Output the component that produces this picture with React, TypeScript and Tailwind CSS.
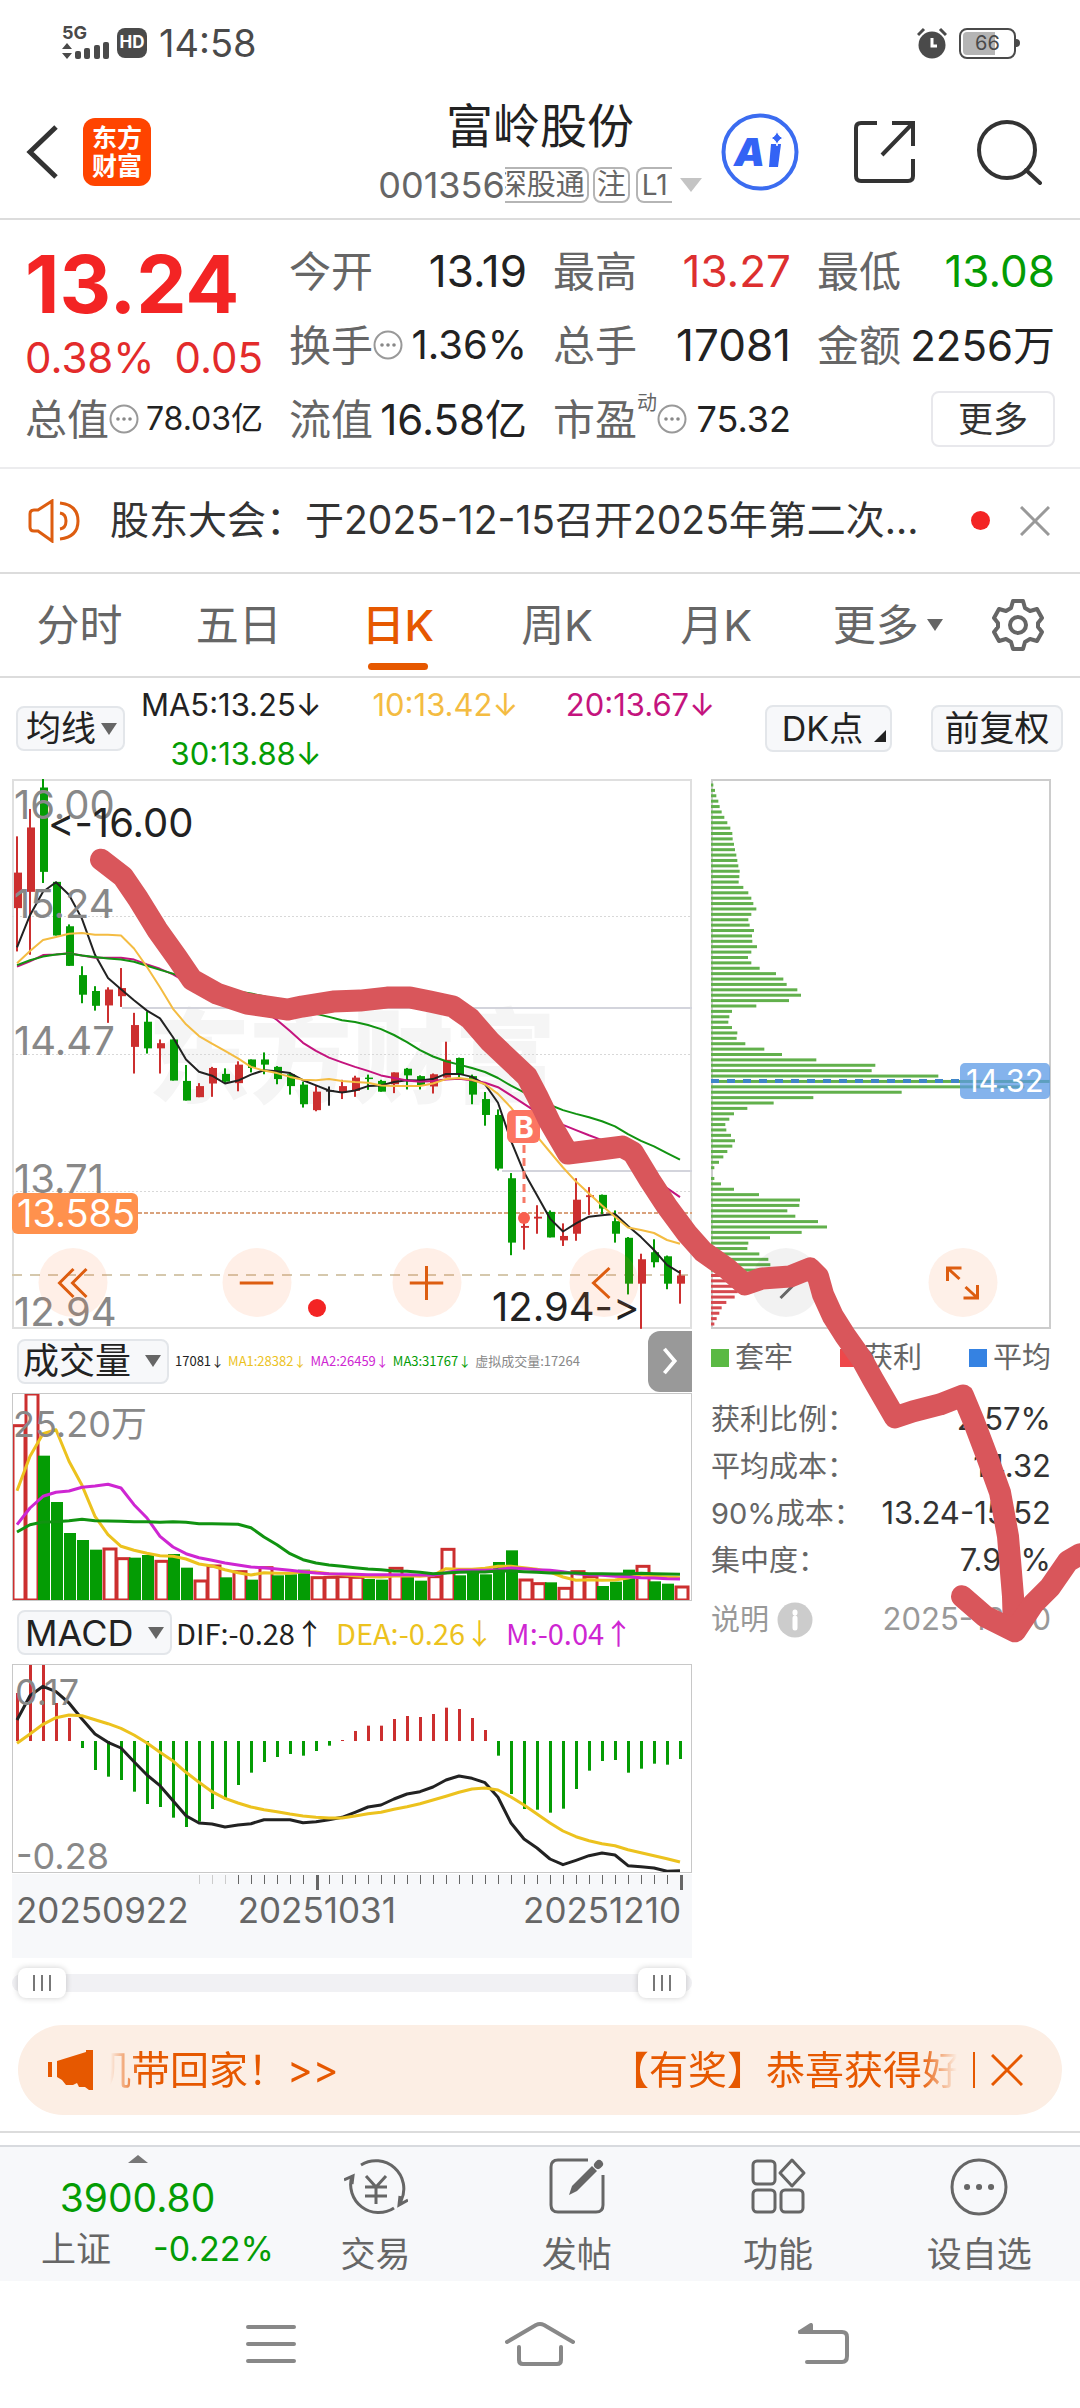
import type { ReactNode } from "react";
import { clsx } from "clsx";

const RED = "#cc2f2f";
const GREEN = "#049c04";
const FONT = "Inter, 'Noto Sans CJK SC', sans-serif";

const STEP = 13;
const FIRST = 5;
const xAt = (i: number) => FIRST + i * STEP;

// color, high, low, body top, body bottom
type Candle = ["r" | "g" | "k", number, number, number, number];

const candles: Candle[] = [
  ["r", 182, 493, 280, 376], ["r", 108, 502, 158, 332], ["g", 27, 308, 50, 278], ["g", 305, 450, 305, 450],
  ["g", 420, 532, 425, 532], ["g", 533, 633, 557, 610], ["g", 587, 653, 600, 640], ["r", 590, 686, 596, 639],
  ["r", 538, 643, 592, 614], ["r", 659, 823, 692, 751], ["g", 655, 769, 683, 755], ["r", 731, 823, 741, 755],
  ["g", 731, 842, 731, 842], ["g", 800, 896, 843, 896], ["r", 849, 887, 857, 887], ["r", 805, 886, 808, 850],
  ["g", 809, 850, 824, 845], ["r", 790, 871, 799, 849], ["g", 785, 820, 785, 808], ["g", 766, 825, 785, 799],
  ["g", 803, 852, 805, 838], ["g", 820, 880, 825, 857], ["g", 845, 915, 853, 906], ["r", 855, 925, 872, 922],
  ["k", 858, 910, 868, 872], ["r", 840, 892, 857, 874], ["r", 829, 886, 834, 870], ["g", 826, 867, 834, 838],
  ["g", 840, 872, 843, 872], ["r", 820, 876, 820, 852], ["g", 808, 866, 810, 828], ["g", 828, 866, 830, 856],
  ["r", 823, 877, 825, 858], ["r", 737, 834, 786, 834], ["g", 780, 840, 781, 825], ["g", 826, 906, 830, 880],
  ["g", 873, 964, 892, 935], ["g", 920, 1085, 935, 1080], ["g", 1092, 1314, 1106, 1280], ["r", 1200, 1299, 1235, 1240],
  ["r", 1179, 1256, 1210, 1215], ["g", 1193, 1266, 1197, 1266], ["r", 1228, 1289, 1262, 1274], ["r", 1106, 1275, 1164, 1256],
  ["r", 1130, 1205, 1152, 1157], ["g", 1150, 1203, 1151, 1188], ["g", 1193, 1280, 1222, 1256], ["g", 1265, 1420, 1267, 1391],
  ["r", 1310, 1513, 1325, 1391], ["g", 1271, 1347, 1306, 1333], ["g", 1315, 1406, 1317, 1391], ["r", 1354, 1445, 1369, 1391],
];

const ma5 = [482, 395, 332, 306, 340, 405, 502, 565, 595, 625, 653, 674, 725, 785, 818, 829, 850, 842, 826, 814, 817, 822, 841, 855, 869, 874, 869, 857, 855, 846, 841, 842, 838, 824, 824, 832, 852, 902, 1005, 1090, 1152, 1215, 1250, 1228, 1210, 1206, 1203, 1235, 1265, 1300, 1340, 1362];
const ma10 = [525, 492, 462, 454, 445, 443, 448, 448, 450, 485, 535, 590, 648, 690, 722, 742, 762, 782, 805, 815, 822, 832, 840, 841, 838, 843, 846, 848, 855, 857, 857, 857, 850, 838, 835, 840, 852, 878, 915, 960, 993, 1035, 1077, 1115, 1147, 1180, 1210, 1239, 1246, 1254, 1273, 1283];
const ma20 = [534, 520, 503, 501, 498, 504, 510, 510, 510, 515, 528, 540, 555, 575, 592, 600, 612, 622, 640, 655, 678, 708, 740, 762, 780, 793, 805, 816, 828, 835, 842, 845, 843, 839, 837, 841, 848, 860, 882, 905, 928, 945, 962, 976, 990, 1003, 1030, 1060, 1080, 1105, 1133, 1157];
const ma30 = [530, 517, 507, 501, 499, 504, 508, 512, 515, 521, 532, 543, 553, 565, 578, 590, 596, 601, 607, 614, 625, 638, 650, 662, 670, 679, 684, 692, 703, 719, 738, 760, 777, 790, 799, 808, 819, 835, 856, 874, 892, 908, 922, 932, 941, 952, 966, 987, 1005, 1020, 1038, 1056];

const volumes: [string, number][] = [
  ["r", 285], ["r", 190], ["g", 378], ["g", 517], ["g", 610], ["g", 631], ["g", 660], ["r", 655], ["r", 684], ["g", 684], ["g", 676], ["r", 692], ["g", 673],
  ["g", 714], ["r", 751], ["r", 706], ["g", 743], ["r", 723], ["g", 750], ["r", 711], ["g", 737], ["g", 734], ["g", 720], ["r", 741], ["r", 740], ["r", 738],
  ["r", 740], ["g", 748], ["g", 750], ["r", 713], ["g", 740], ["g", 753], ["r", 738], ["r", 656], ["g", 737], ["g", 728], ["g", 734], ["g", 697], ["g", 662],
  ["r", 748], ["r", 759], ["g", 758], ["r", 773], ["r", 723], ["r", 738], ["g", 769], ["g", 756], ["g", 720], ["r", 707], ["g", 755], ["g", 762], ["r", 769],
];
const vma1 = [483, 380, 312, 300, 395, 467, 560, 615, 650, 662, 671, 678, 680, 688, 703, 709, 720, 729, 736, 729, 731, 731, 726, 727, 732, 735, 738, 741, 742, 739, 738, 740, 737, 717, 719, 719, 716, 710, 710, 714, 719, 727, 742, 752, 750, 752, 751, 745, 735, 740, 742, 744];
const vma2 = [585, 535, 500, 488, 484, 473, 469, 464, 475, 525, 565, 620, 652, 672, 684, 692, 700, 706, 712, 714, 718, 722, 726, 730, 732, 733, 734, 735, 735, 735, 735, 736, 737, 729, 722, 722, 722, 720, 715, 717, 720, 722, 726, 732, 735, 737, 740, 741, 744, 745, 747, 748];
const vma3 = [607, 585, 577, 576, 573, 569, 573, 574, 575, 576, 576, 578, 576, 578, 582, 582, 583, 584, 594, 622, 645, 672, 690, 700, 706, 710, 714, 718, 720, 724, 725, 728, 732, 730, 728, 727, 727, 724, 724, 726, 728, 730, 730, 730, 732, 732, 733, 733, 731, 732, 733, 734];

const macd = [282, 195, 195, 312, 357, 447, 513, 533, 543, 578, 615, 624, 656, 684, 668, 630, 602, 558, 521, 489, 474, 465, 470, 456, 440, 423, 396, 380, 380, 360, 351, 354, 345, 326, 330, 357, 393, 470, 585, 630, 632, 641, 629, 570, 515, 486, 483, 521, 509, 494, 497, 480];
const dif = [363, 290, 262, 278, 312, 360, 405, 430, 447, 488, 528, 560, 605, 650, 672, 675, 684, 678, 674, 662, 662, 662, 671, 668, 662, 655, 640, 624, 618, 600, 585, 578, 564, 543, 531, 538, 551, 595, 672, 720, 747, 780, 797, 784, 770, 762, 768, 800, 803, 807, 817, 815];
const dea = [433, 405, 376, 356, 348, 350, 362, 374, 388, 408, 432, 460, 486, 520, 550, 578, 598, 612, 624, 632, 638, 645, 651, 655, 657, 657, 651, 644, 640, 631, 623, 614, 603, 592, 580, 570, 567, 573, 594, 618, 645, 672, 696, 713, 725, 734, 740, 752, 761, 770, 779, 789];

const chips = [
  7, 12, 16, 22, 26, 32, 40, 49, 58, 64, 65, 69, 72, 76, 79, 82, 86, 85, 83, 97, 112, 121, 127, 136, 121, 112, 116, 129, 123, 124, 138, 121, 111, 121,
  146, 195, 217, 227, 259, 270, 234, 136, 63, 55, 52, 63, 79, 77, 103, 160, 213, 316, 493, 482, 682, 1016, 940, 572, 307, 188, 109, 69, 55, 43, 46, 60,
  72, 64, 49, 37, 24, 10, 0, 10, 30, 69, 144, 267, 265, 229, 253, 321, 348, 272, 177, 112, 109, 145, 172, 178, 150, 110, 80, 75, 80, 71, 46, 32, 25, 17, 10,
];

const priceY = (v: number) => (v - 27) * 0.37;
const volY = (v: number) => (v - 190) / 3;
const macdY = (v: number) => (v - 195) / 3;

function Line({ data, y, color, width = 2 }: { data: number[]; y: (v: number) => number; color: string; width?: number }) {
  return (
    <polyline
      fill="none"
      stroke={color}
      strokeWidth={width}
      strokeLinejoin="round"
      points={data.map((v, i) => `${xAt(i)},${y(v).toFixed(1)}`).join(" ")}
    />
  );
}

function Triangle({ className }: { className: string }) {
  return (
    <svg viewBox="0 0 10 10" preserveAspectRatio="none" className={className} aria-hidden="true">
      <path d="M0 0H10L5 10Z" fill="currentColor" />
    </svg>
  );
}

function Dots() {
  return (
    <svg viewBox="0 0 30 30" className="h-[30px] w-[30px] shrink-0" aria-hidden="true">
      <circle cx="15" cy="15" r="13.5" fill="none" stroke="#999" strokeWidth="2" />
      <g fill="#888">
        <circle cx="9" cy="15" r="1.8" />
        <circle cx="15" cy="15" r="1.8" />
        <circle cx="21" cy="15" r="1.8" />
      </g>
    </svg>
  );
}

function Stat({ label, value, extra, color = "text-[#222]", size = "text-[44px]" }: { label: string; value: string; extra?: ReactNode; color?: string; size?: string }) {
  return (
    <div className="flex h-[74px] items-center whitespace-nowrap">
      <span className="text-[42px] text-[#666]">{label}</span>
      {extra}
      <span className={clsx("ml-auto", color, size)}>{value}</span>
    </div>
  );
}

function Picker({ label, option, className }: { label: string; option: string; className: string }) {
  return (
    <label className="relative flex h-[45px] shrink-0 items-center rounded-lg border-2 border-[#e3e6ea] bg-[#f7f8fa] text-[#222]">
      <select aria-label={label} className={clsx("h-14 appearance-none bg-transparent outline-none", className)}>
        <option>{option}</option>
      </select>
      <Triangle className="pointer-events-none absolute right-1.5 h-3 w-4 text-[#666]" />
    </label>
  );
}

function StatusBar() {
  return (
    <div className="flex h-[86px] items-center pr-[60px] pl-[62px] text-[#4a4a4a]">
      <svg viewBox="0 0 48 36" className="h-9 w-12 overflow-visible" fill="currentColor" aria-hidden="true">
        <text x="0" y="14" fontSize="18" fontWeight="700" style={{ fontFamily: FONT }}>5G</text>
        <path d="M0 24L5 18L10 24ZM0 28L5 34L10 28Z" />
        <rect x="13" y="26" width="6" height="8" rx="2" />
        <rect x="22" y="23" width="6" height="11" rx="2" />
        <rect x="32" y="20" width="6" height="14" rx="2" />
        <rect x="41" y="17" width="6" height="17" rx="2" />
      </svg>
      <span className="ml-[7px] flex h-[30px] w-[30px] items-center justify-center rounded-lg bg-[#4a4a4a] text-[17px] font-bold text-white">HD</span>
      <span className="ml-3 text-[38px]">14:58</span>
      <svg viewBox="0 0 30 32" className="ml-auto h-8 w-[30px]" aria-hidden="true">
        <circle cx="15" cy="18" r="13.5" fill="currentColor" />
        <path d="M1 8L7 2M29 8L23 2" stroke="currentColor" strokeWidth="3" />
        <path d="M15 11V19H20" fill="none" stroke="#fff" strokeWidth="3" />
      </svg>
      <div className="ml-3 flex items-center">
        <div className="flex h-[31px] w-[57px] items-center rounded-lg border-2 border-[#4a4a4a] p-0.5">
          <span className="flex h-full w-[32px] items-center justify-end rounded-l bg-[#b5b5b5]" />
          <span className="-ml-5 text-[20px] leading-none">66</span>
        </div>
        <span className="h-2 w-1 rounded-r bg-[#4a4a4a]" />
      </div>
    </div>
  );
}

function Header() {
  return (
    <header className="grid h-[134px] grid-cols-[1fr_auto_1fr] items-center border-b-2 border-[#dcdcdc]">
      <div className="flex items-center gap-6 pl-[26px]">
        <button type="button" aria-label="返回">
          <svg viewBox="0 0 33 56" className="h-14 w-[33px]" fill="none" stroke="#333" strokeWidth="5">
            <path d="M30 3L4 28L30 53" />
          </svg>
        </button>
        <div className="flex h-[68px] w-[68px] flex-col items-center justify-center rounded-xl bg-[#ff4400] text-[25px] leading-[28px] font-bold text-white">
          <span>东方</span>
          <span>财富</span>
        </div>
      </div>
      <div className="flex flex-col items-center">
        <h1 className="text-[47px] leading-[52px] text-[#222]">富岭股份</h1>
        <div className="mt-[14px] flex h-[38px] items-center text-[36px] text-[#666]">
          <span>001356</span>
          <span className="flex h-9 w-[84px] items-center justify-end overflow-hidden rounded-r-lg border-2 border-l-0 border-[#b5b5b5] pr-0.5 text-[29px]">
            <span className="shrink-0">深股通</span>
          </span>
          <span className="ml-1 flex h-9 w-[37px] items-center justify-center rounded-lg border-2 border-[#b5b5b5] text-[29px]">注</span>
          <span className="ml-1.5 flex h-9 w-[36px] items-center justify-center rounded-l-lg border-2 border-r-0 border-[#b5b5b5] text-[28px]">L1</span>
          <Triangle className="ml-2 h-[14px] w-[22px] text-[#c4c4c4]" />
        </div>
      </div>
      <div className="flex items-center justify-end pr-[38px]">
        <button type="button" aria-label="Ai">
          <svg viewBox="0 0 78 78" className="h-[78px] w-[78px]">
            <circle cx="39" cy="39" r="36.5" fill="none" stroke="#3b6cf0" strokeWidth="4" />
            <text x="13" y="53" fontSize="39" fontWeight="900" fontStyle="italic" fill="#3363f5" style={{ fontFamily: FONT }}>A</text>
            <path d="M50 31H60L57 54H48Z" fill="#3363f5" />
            <path d="M56 17Q57 24 63 25Q57 26 56 33Q55 26 49 25Q55 24 56 17Z" fill="#3363f5" stroke="#fff" strokeWidth="1" />
          </svg>
        </button>
        <button type="button" aria-label="分享" className="ml-[53px]">
          <svg viewBox="0 0 66 66" className="h-[66px] w-[66px]" fill="none" stroke="#333" strokeWidth="4">
            <path d="M25 4H9Q4 4 4 9V57Q4 62 9 62H56Q61 62 61 57V40M40 4H61V27M61 4L30 36" />
          </svg>
        </button>
        <button type="button" aria-label="搜索" className="ml-[58px]">
          <svg viewBox="0 0 66 66" className="h-[66px] w-[66px]" fill="none" stroke="#333" strokeWidth="4">
            <circle cx="31" cy="31" r="28" />
            <path d="M50 51L64 64" strokeLinecap="round" />
          </svg>
        </button>
      </div>
    </header>
  );
}

function Quote() {
  return (
    <section className="grid grid-cols-4 gap-x-[26px] border-b-2 border-[#ececee] px-[25px] pt-[14px] pb-[11px]">
      <div className="row-span-2 pt-2 text-[#f32424]">
        <div className="text-[80px] leading-[84px] font-bold">13.24</div>
        <div className="mt-2 flex justify-between text-[42px] leading-[48px] text-[#e32b2b]">
          <span>0.38%</span>
          <span>0.05</span>
        </div>
      </div>
      <Stat label="今开" value="13.19" />
      <Stat label="最高" value="13.27" color="text-[#dd2f2f]" />
      <Stat label="最低" value="13.08" color="text-[#049c04]" />
      <Stat label="换手" value="1.36%" extra={<Dots />} size="text-[40px]" />
      <Stat label="总手" value="17081" />
      <Stat label="金额" value="2256万" size="text-[42px]" />
      <Stat label="总值" value="78.03亿" extra={<Dots />} size="text-[32px]" />
      <Stat label="流值" value="16.58亿" size="text-[42px]" />
      <Stat
        label="市盈"
        value="75.32"
        size="text-[36px]"
        extra={
          <>
            <sup className="-top-4 text-[20px] text-[#666]">动</sup>
            <Dots />
          </>
        }
      />
      <div className="flex items-center justify-end">
        <button type="button" className="h-14 w-[124px] rounded-lg border-2 border-[#e8e8ec] text-[35px] text-[#333]">更多</button>
      </div>
    </section>
  );
}

function Notice() {
  return (
    <div className="flex h-[105px] items-center border-b-2 border-[#dcdcdc] pr-[30px] pl-[28px]">
      <svg viewBox="0 0 52 44" className="h-11 w-[52px] shrink-0" fill="none" stroke="#dd5d10" strokeWidth="3" aria-hidden="true">
        <path d="M10 11H6Q2 11 2 15V28Q2 32 6 32H10L24 42V2L10 11ZM32 14Q38 15 38 22Q38 29 32 30M32 4Q50 6 50 22Q50 38 32 40" />
      </svg>
      <p className="ml-[30px] min-w-0 flex-1 truncate text-[39px] text-[#333]">股东大会：于2025-12-15召开2025年第二次...</p>
      <span className="ml-4 h-[19px] w-[19px] shrink-0 rounded-full bg-[#f32424]" />
      <button type="button" aria-label="关闭" className="ml-[30px]">
        <svg viewBox="0 0 30 30" className="h-[30px] w-[30px]" stroke="#999" strokeWidth="3">
          <path d="M1 1L29 29M29 1L1 29" />
        </svg>
      </button>
    </div>
  );
}

const tabs = ["分时", "五日", "日K", "周K", "月K"];

function Tabs() {
  return (
    <nav className="grid h-[104px] grid-cols-[repeat(6,minmax(0,1fr))_125px] border-b-2 border-[#dcdcdc] text-[43px] text-[#666]">
      {tabs.map((tab) => (
        <button
          key={tab}
          type="button"
          className={clsx("relative", tab === "日K" && "font-medium text-[#e65800]")}
        >
          {tab}
          {tab === "日K" && <span className="absolute bottom-1.5 left-1/2 h-[7px] w-[60px] -translate-x-1/2 rounded-full bg-[#e65800]" />}
        </button>
      ))}
      <button type="button" className="flex items-center pl-[37px]">
        更多
        <Triangle className="ml-2 h-3 w-4" />
      </button>
      <button type="button" aria-label="设置" className="flex items-center justify-center">
        <svg viewBox="0 0 52 52" className="h-[52px] w-[52px]" fill="none" stroke="#666" strokeWidth="4" strokeLinejoin="round">
          <path d="M21 2H31L33 9L38 12L45 10L50 19L46 24V28L50 33L45 42L38 40L33 43L31 50H21L19 43L14 40L7 42L2 33L6 28V24L2 19L7 10L14 12L19 9Z" />
          <circle cx="26" cy="26" r="8" />
        </svg>
      </button>
    </nav>
  );
}

function AverageBar() {
  return (
    <div className="flex h-[101px] items-center pr-[17px] pl-4">
      <Picker label="均线" option="均线" className="w-[105px] pl-2 text-[35px]" />
      <div className="grid flex-1 grid-cols-3 pr-[50px] text-right text-[31px] leading-[49px] whitespace-nowrap">
        <span className="text-[#222]">MA5:13.25↓</span>
        <span className="text-[#f4bc42]">10:13.42↓</span>
        <span className="text-[#c4147e]">20:13.67↓</span>
        <span className="text-[#049c04]">30:13.88↓</span>
      </div>
      <button type="button" className="relative h-[47px] w-[127px] rounded-lg border-2 border-[#e3e6ea] bg-[#f7f8fa] pr-3 text-[34px] leading-none text-[#222]">
        DK点
        <svg viewBox="0 0 10 10" className="absolute right-1 bottom-2 h-3 w-3" aria-hidden="true">
          <path d="M10 0V10H0Z" fill="#222" />
        </svg>
      </button>
      <button type="button" className="ml-[39px] h-[47px] w-[132px] rounded-lg border-2 border-[#e3e6ea] bg-[#f7f8fa] text-[35px] leading-none text-[#222]">前复权</button>
    </div>
  );
}

const candleColor = { r: RED, g: GREEN, k: "#222" };

function PriceChart() {
  return (
    <svg viewBox="0 0 680 550" className="block h-auto w-full" style={{ fontFamily: FONT }}>
      <text x="136" y="316" fontSize="102" fontWeight="900" fill="#f5f5f5">东方财富</text>
      <rect x="1" y="1" width="678" height="548" fill="none" stroke="#dfdfdf" strokeWidth="2" />
      <g stroke="#d8d8d8" strokeDasharray="2 2">
        <path d="M0 137.5H680M0 275.5H680M0 412.5H680" />
      </g>
      <path d="M110 229H680M490 392H680" stroke="#d3d4dc" strokeWidth="2" />
      <path d="M0 434H680" stroke="#d9a27c" strokeWidth="2" strokeDasharray="4 2" />
      <path d="M0 496H680" stroke="#d5c8ad" strokeWidth="2" strokeDasharray="10 8" />
      {candles.map(([c, high, low, top, bottom], i) => (
        <g key={i} fill={candleColor[c]}>
          <rect x={xAt(i) - 1} y={priceY(high)} width="2" height={priceY(low) - priceY(high)} />
          <rect x={xAt(i) - 3} y={priceY(top)} width="8" height={priceY(bottom) - priceY(top)} />
        </g>
      ))}
      <Line data={ma5} y={priceY} color="#222" />
      <Line data={ma20} y={priceY} color="#c4147e" />
      <Line data={ma30} y={priceY} color="#119311" />
      <Line data={ma10} y={priceY} color="#f4bc42" />
      <g fontSize="40" fill="#888">
        <text x="2" y="40">16.00</text>
        <text x="2" y="139">15.24</text>
        <text x="2" y="276">14.47</text>
        <text x="2" y="414">13.71</text>
        <text x="2" y="547">12.94</text>
      </g>
      <g fontSize="40" fill="#222" className="[font-variant-ligatures:none] [font-feature-settings:'calt'_0]">
        <text x="36" y="58">&lt;-16.00</text>
        <text x="480" y="542">12.94-&gt;</text>
      </g>
      <rect x="0" y="414" width="126" height="41" rx="6" fill="#ff914d" />
      <text x="5" y="448" fontSize="38" fill="#fff">13.585</text>
      <path d="M512 366V424" stroke="#f77a68" strokeWidth="3" strokeDasharray="8 5" />
      <circle cx="512" cy="439" r="6" fill="#f95f4f" />
      <rect x="495" y="331" width="33" height="33" rx="6" fill="#fc7562" />
      <text x="502" y="359" fontSize="30" fontWeight="700" fill="#fff">B</text>
      <circle cx="305" cy="529" r="9" fill="#f32424" />
    </svg>
  );
}

function ChartButton({ label, className, children }: { label: string; className: string; children: ReactNode }) {
  return (
    <button type="button" aria-label={label} className={clsx("absolute bottom-3 flex h-[69px] w-[69px] -translate-x-1/2 items-center justify-center rounded-full", className)}>
      <svg viewBox="0 0 34 34" className="h-[34px] w-[34px]" fill="none" stroke="currentColor" strokeWidth="3">
        {children}
      </svg>
    </button>
  );
}

function VolumeChart() {
  return (
    <svg viewBox="0 0 680 208" className="block h-auto w-full" style={{ fontFamily: FONT }}>
      {volumes.map(([c, v], i) =>
        c === "g" ? (
          <rect key={i} x={xAt(i) - 5} y={volY(v)} width="12" height={207 - volY(v)} fill={GREEN} />
        ) : (
          <rect key={i} x={xAt(i) - 4} y={volY(v) + 1} width="12" height={206 - volY(v)} fill="#fff" stroke={RED} strokeWidth="3" />
        )
      )}
      <Line data={vma1} y={volY} color="#ecc21e" width={3} />
      <Line data={vma2} y={volY} color="#ce26d2" width={3} />
      <Line data={vma3} y={volY} color="#119311" width={3} />
      <rect x="0.5" y="0.5" width="679" height="207" fill="none" stroke="#c8c8c8" />
      <text x="1" y="44" fontSize="36" fill="#888">25.20万</text>
    </svg>
  );
}

function MacdChart() {
  const zero = macdY(426);
  return (
    <svg viewBox="0 0 680 210" className="block h-auto w-full" style={{ fontFamily: FONT }}>
      {macd.map((v, i) => (
        <rect
          key={i}
          x={xAt(i) - 1}
          y={Math.min(zero, macdY(v))}
          width="3"
          height={Math.abs(zero - macdY(v))}
          fill={v < 426 ? RED : GREEN}
        />
      ))}
      <Line data={dif} y={macdY} color="#222" width={3} />
      <Line data={dea} y={macdY} color="#ecc21e" width={3} />
      <rect x="0.5" y="0.5" width="679" height="208" fill="none" stroke="#c8c8c8" />
      <g fontSize="36" fill="#888">
        <text x="3" y="41">0.17</text>
        <text x="4" y="205">-0.28</text>
      </g>
    </svg>
  );
}

function TimeAxis() {
  return (
    <div className="bg-[#f7f8fa] pb-7 text-[35px] leading-[40px] text-[#666]">
      <svg viewBox="0 0 680 16" className="block h-auto w-full">
        {Array.from({ length: 38 }, (_, k) => k + 14).map((i) => {
          const major = i === 23 || i === 51;
          return (
            <rect key={i} x={xAt(i)} y="1" width={major ? 3 : 1} height={major ? 15 : 9} fill={i < 17 ? "#ccc" : "#666"} />
          );
        })}
      </svg>
      <div className="flex justify-between pr-[11px] pl-1">
        <span>20250922</span>
        <span className="mr-[78px]">20251031</span>
        <span>20251210</span>
      </div>
    </div>
  );
}

const thumb =
  "pointer-events-none absolute inset-x-1.5 inset-y-0 m-0 appearance-none bg-transparent outline-none [&::-webkit-slider-thumb]:pointer-events-auto [&::-webkit-slider-thumb]:h-[30px] [&::-webkit-slider-thumb]:w-12 [&::-webkit-slider-thumb]:appearance-none [&::-webkit-slider-thumb]:rounded-lg [&::-webkit-slider-thumb]:bg-white [&::-webkit-slider-thumb]:bg-[repeating-linear-gradient(90deg,#777_0_2px,#fff_2px_8px)] [&::-webkit-slider-thumb]:bg-[length:18px_16px] [&::-webkit-slider-thumb]:bg-center [&::-webkit-slider-thumb]:bg-no-repeat [&::-webkit-slider-thumb]:shadow-[0_0_6px_rgba(0,0,0,0.2)]";

function RangeSlider() {
  return (
    <div className="relative mt-[10px] flex h-[30px] items-center">
      <div className="h-[18px] w-full rounded-full bg-[#f1f1f4]" />
      <input type="range" aria-label="起始日期" min={0} max={100} defaultValue={0} className={thumb} />
      <input type="range" aria-label="结束日期" min={0} max={100} defaultValue={100} className={thumb} />
    </div>
  );
}

function ChipChart() {
  return (
    <svg viewBox="0 0 340 550" className="block h-auto w-full" style={{ fontFamily: FONT }}>
      <rect x="1" y="1" width="338" height="548" fill="none" stroke="#ccc" strokeWidth="2" />
      {chips.map((v, i) => (
        <rect key={i} x="0" y={4.5 + i * 5.39} width={v / 3} height="3" fill={i > 90 ? "#d64a50" : "#62b04c"} />
      ))}
      <path d="M0 302H250" stroke="#3f86c9" strokeWidth="4" strokeDasharray="8 8" />
      <rect x="249" y="284" width="90" height="36" rx="5" fill="#5b9ae6" fillOpacity="0.75" />
      <text x="255" y="313" fontSize="31" fill="#fff">14.32</text>
    </svg>
  );
}

const legend = [
  { name: "套牢", color: "bg-[#5ab943]" },
  { name: "获利", color: "bg-[#ee474a]" },
  { name: "平均", color: "bg-[#3582e2]" },
];

const chipStats = [
  ["获利比例：", "2.57%"],
  ["平均成本：", "14.32"],
  ["90%成本：", "13.24-15.52"],
  ["集中度：", "7.93%"],
];

function ChipPanel() {
  return (
    <div className="min-w-0">
      <div className="relative">
        <ChipChart />
        <ChartButton label="下一页" className="left-[22%] bg-black/5 text-[#666]">
          <path d="M12 2L27 17L12 32" />
        </ChartButton>
        <ChartButton label="全屏" className="left-[74%] bg-[#fef0e8] text-[#dd5d10]">
          <path d="M2 15V2H16M2 2L14 13M32 19V32H18M32 32L20 21" />
        </ChartButton>
      </div>
      <div className="flex h-[58px] items-center justify-between text-[29px] text-[#666]">
        {legend.map((item) => (
          <span key={item.name} className="flex items-center gap-1.5">
            <i className={clsx("h-[18px] w-[18px]", item.color)} />
            {item.name}
          </span>
        ))}
      </div>
      <dl className="mt-[9px]">
        {chipStats.map(([name, value]) => (
          <div key={name} className="flex h-[47px] items-center justify-between whitespace-nowrap">
            <dt className="text-[29px] text-[#666]">{name}</dt>
            <dd className="text-[31px] text-[#333]">{value}</dd>
          </div>
        ))}
      </dl>
      <div className="mt-3 flex h-[47px] items-center text-[29px] text-[#999]">
        <span>说明</span>
        <button type="button" aria-label="说明" className="ml-2">
          <svg viewBox="0 0 36 36" className="h-9 w-9">
            <circle cx="18" cy="18" r="17.5" fill="#ccc" />
            <path d="M18 10V11M18 16V26" stroke="#fff" strokeWidth="5" strokeLinecap="round" />
          </svg>
        </button>
        <span className="ml-auto text-[31px]">2025-12-10</span>
      </div>
    </div>
  );
}

function Charts() {
  return (
    <section className="grid grid-cols-[2fr_1fr] gap-x-[19px] pr-[29px] pl-3">
      <div className="min-w-0">
        <div className="relative">
          <PriceChart />
          <ChartButton label="最早" className="left-[9%] bg-[#fb7a3a]/12 text-[#dd5d10]">
            <path d="M17 3L3 17L17 31M30 3L16 17L30 31" />
          </ChartButton>
          <ChartButton label="缩小" className="left-[36%] bg-[#fb7a3a]/12 text-[#dd5d10]">
            <path d="M0 17H34" />
          </ChartButton>
          <ChartButton label="放大" className="left-[61%] bg-[#fb7a3a]/12 text-[#dd5d10]">
            <path d="M0 17H34M17 0V34" />
          </ChartButton>
          <ChartButton label="向前" className="left-[87%] bg-[#fb7a3a]/12 text-[#dd5d10]">
            <path d="M23 2L7 17L23 32" />
          </ChartButton>
        </div>

        <div className="flex h-[64px] items-center pl-[5px] whitespace-nowrap">
          <Picker label="副图指标" option="成交量" className="w-[148px] pl-1 text-[36px]" />
          <div className="ml-1.5 flex gap-1 font-['Noto_Sans_CJK_SC',sans-serif] text-[13px]">
            <span className="text-[#222]">17081↓</span>
            <span className="text-[#ecc21e]">MA1:28382↓</span>
            <span className="text-[#ce26d2]">MA2:26459↓</span>
            <span className="text-[#049c04]">MA3:31767↓</span>
            <span className="text-[#888]">虚拟成交量:17264</span>
          </div>
          <button type="button" aria-label="收起" className="ml-auto flex h-[61px] w-11 items-center justify-center rounded-l-xl bg-[#999]">
            <svg viewBox="0 0 16 30" className="h-[28px] w-4" fill="none" stroke="#fff" strokeWidth="4">
              <path d="M2 2L13 15L2 28" />
            </svg>
          </button>
        </div>
        <VolumeChart />

        <div className="flex h-[63px] items-center pl-[5px] whitespace-nowrap">
          <Picker label="技术指标" option="MACD" className="w-[151px] pl-1.5 text-[36px]" />
          <div className="ml-1 flex gap-3 font-['Noto_Sans_CJK_SC',sans-serif] text-[29px]">
            <span className="text-[#222]">DIF:-0.28↑</span>
            <span className="text-[#ecc21e]">DEA:-0.26↓</span>
            <span className="text-[#ce26d2]">M:-0.04↑</span>
          </div>
        </div>
        <MacdChart />
        <TimeAxis />
        <RangeSlider />
      </div>
      <ChipPanel />
    </section>
  );
}

function PrizeBanner() {
  return (
    <div className="mx-[18px] mt-[27px] flex h-[90px] items-center rounded-full bg-[#fceee4] pr-[39px] pl-[30px] text-[#e65800]">
      <svg viewBox="0 0 46 40" className="h-10 w-[46px] shrink-0" fill="currentColor" aria-hidden="true">
        <path d="M0 12H4V27H0ZM9 11L38 2V0H45V40H41L37 37H31L29 33L25 35H18L14 30L9 27Z" />
      </svg>
      <div className="ml-4 flex min-w-0 flex-1 justify-between overflow-hidden text-[39px] whitespace-nowrap [mask-image:linear-gradient(90deg,transparent,#000_30px,#000_810px,transparent)]">
        <span className="-ml-[18px]">机带回家！&gt;&gt;</span>
        <span className="-mr-1">【有奖】恭喜获得好</span>
      </div>
      <span className="ml-4 h-9 w-0.5 bg-[#e65800]" />
      <button type="button" aria-label="关闭" className="ml-4">
        <svg viewBox="0 0 32 32" className="h-8 w-8" stroke="currentColor" strokeWidth="3">
          <path d="M1 1L31 31M31 1L1 31" />
        </svg>
      </button>
    </div>
  );
}

function ToolButton({ label, children }: { label: string; children: ReactNode }) {
  return (
    <button type="button" className="flex flex-1 flex-col items-center pt-2 text-[35px] leading-[46px] text-[#666]">
      <svg viewBox="0 0 64 64" className="mb-3 h-16 w-16" fill="none" stroke="currentColor" strokeWidth="3">
        {children}
      </svg>
      {label}
    </button>
  );
}

function BottomBar() {
  return (
    <footer className="mt-4 border-t-2 border-[#dcdcdc] pt-3">
      <div className="flex h-[136px] border-t-2 border-[#d8dade] bg-[#f7f8fa]">
        <button type="button" className="flex w-[275px] flex-col items-center">
          <Triangle className="mt-2 h-2 w-5 rotate-180 text-[#777]" />
          <span className="mt-2 text-[39px] leading-[54px] text-[#049c04]">3900.80</span>
          <span className="flex items-center gap-[42px] pl-10 text-[35px] leading-[48px] text-[#666]">
            上证
            <span className="text-[34px] text-[#049c04]">-0.22%</span>
          </span>
        </button>
        <ToolButton label="交易">
          <path d="M17 10A28 28 0 0 1 57 46L55 45M50 53A28 28 0 0 1 8 21M0 25L9 21L8 29M64 45L55 50L56 41" />
          <path d="M22 21L32 32L42 21M32 31V49M21 32H43M21 41H43" />
        </ToolButton>
        <ToolButton label="发帖">
          <path d="M43 5H13Q6 5 6 12V50Q6 57 13 57H51Q58 57 58 50V20" />
          <path d="M24 40L27 31L47 11L52 16L32 36Z" fill="currentColor" stroke="none" />
          <path d="M53 10L54 9" strokeWidth="8" strokeLinecap="round" />
        </ToolButton>
        <ToolButton label="功能">
          <rect x="7" y="6" width="22" height="23" rx="4" />
          <rect x="7" y="35" width="22" height="22" rx="4" />
          <rect x="35" y="35" width="22" height="22" rx="4" />
          <path d="M46 5L58 18L46 31L34 18Z" strokeLinejoin="round" />
        </ToolButton>
        <ToolButton label="设自选">
          <circle cx="32" cy="32" r="27" />
          <path d="M20 32H20.1M32 32H32.1M44 32H44.1" strokeWidth="6" strokeLinecap="round" />
        </ToolButton>
      </div>
    </footer>
  );
}

function SystemNav() {
  return (
    <div className="flex h-[126px] items-center justify-between px-[226px]">
      <button type="button" aria-label="最近任务" className="flex w-[90px] justify-center">
        <svg viewBox="0 0 50 42" className="h-[42px] w-[50px]" stroke="#888" strokeWidth="4" strokeLinecap="round">
          <path d="M2 4H48M2 21H48M2 38H48" />
        </svg>
      </button>
      <button type="button" aria-label="主屏幕" className="flex w-[90px] justify-center">
        <svg viewBox="0 0 70 46" className="h-[46px] w-[70px]" fill="none" stroke="#888" strokeWidth="4" strokeLinecap="round" strokeLinejoin="round">
          <path d="M2 21L31 4Q35 2 39 4L68 21M14 26V39Q14 43 18 43H52Q56 43 56 39V26" />
        </svg>
      </button>
      <button type="button" aria-label="后退" className="flex w-[90px] justify-end pr-1">
        <svg viewBox="0 0 52 42" className="h-[42px] w-[52px]" fill="none" stroke="#888" strokeWidth="4" strokeLinecap="round" strokeLinejoin="round">
          <path d="M2 9H44Q49 9 49 14V33Q49 39 44 39H9" />
          <path d="M2 9L13 2V9Z" fill="#888" />
        </svg>
      </button>
    </div>
  );
}

// Hand-drawn trend arrow on top of the page
function TrendMark() {
  return (
    <svg viewBox="0 0 1080 2408" preserveAspectRatio="none" className="pointer-events-none absolute inset-0 h-full w-full" fill="none" stroke="#d9565b" strokeWidth="22" strokeLinecap="round" strokeLinejoin="round" aria-hidden="true">
      <path d="M101 860L123 877L138 899L157 930L177 958L192 980L217 994L247 1004L288 1010L302 1007L333 1002L360 1001L387 998L410 998L430 1002L453 1007L470 1019L490 1042L527 1077L537 1096L550 1123L568 1154L600 1150L622 1147L633 1153L650 1181L667 1207L687 1234L703 1252L727 1269L745 1285L762 1279L790 1277L810 1269L818 1277L823 1295L833 1317L845 1336L862 1360L873 1380L895 1418L913 1412L940 1405L963 1396L973 1420L987 1457L1000 1493L1008 1537L1013 1597L1014 1630" />
      <path d="M962 1597L985 1617L1015 1632L1033 1605L1050 1588L1068 1562L1080 1555" />
    </svg>
  );
}

export default function App() {
  return (
    <div className="relative overflow-hidden bg-white font-['Inter','Noto_Sans_CJK_SC',sans-serif]">
      <StatusBar />
      <Header />
      <Quote />
      <Notice />
      <Tabs />
      <AverageBar />
      <Charts />
      <PrizeBanner />
      <BottomBar />
      <SystemNav />
      <TrendMark />
    </div>
  );
}
